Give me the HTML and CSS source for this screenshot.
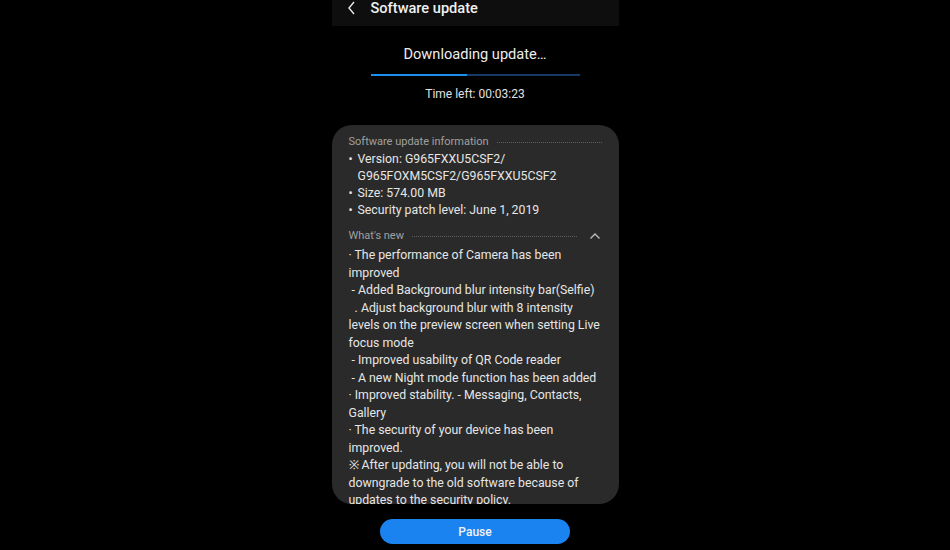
FILE: index.html
```html
<!DOCTYPE html>
<html lang="en">
<head>
    <meta charset="UTF-8">
    <title>Software update</title>
    <link rel="stylesheet" href="styles.css">
</head>
<body>
    <div class="screen">
        <div class="topbar">
            <svg class="back" width="10" height="14" viewBox="0 0 10 14"><path d="M7 1 L2 7 L7 13" fill="none" stroke="#e8e8e8" stroke-width="1.4"/></svg>
            <span class="title">Software update</span>
        </div>

        <div class="status">
            <div class="status-text">Downloading update…</div>
            <div class="progress"><div class="progress-fill" style="width: 46%"></div></div>
            <div class="time-left">Time left: 00:03:23</div>
        </div>

        <div class="card">
            <div class="section-head">
                <span>Software update information</span>
                <span class="dots"></span>
            </div>
            <ul class="info">
                <li>Version: G965FXXU5CSF2/<br>G965FOXM5CSF2/G965FXXU5CSF2</li>
                <li>Size: 574.00 MB</li>
                <li>Security patch level: June 1, 2019</li>
            </ul>

            <div class="section-head whats-new">
                <span>What's new</span>
                <span class="dots"></span>
                <svg class="chev" width="12" height="8" viewBox="0 0 12 8"><path d="M1.5 6.5 L6 2 L10.5 6.5" fill="none" stroke="#bdbdbd" stroke-width="1.3"/></svg>
            </div>
            <div class="notes">
                <p>· The performance of Camera has been<br>improved</p>
                <p>&nbsp;- Added Background blur intensity bar(Selfie)</p>
                <p>&nbsp;&nbsp;. Adjust background blur with 8 intensity<br>levels on the preview screen when setting Live<br>focus mode</p>
                <p>&nbsp;- Improved usability of QR Code reader</p>
                <p>&nbsp;- A new Night mode function has been added</p>
                <p>· Improved stability. - Messaging, Contacts,<br>Gallery</p>
                <p>· The security of your device has been<br>improved.</p>
                <p>※ After updating, you will not be able to<br>downgrade to the old software because of<br>updates to the security policy.</p>
            </div>
        </div>

        <div class="actions">
            <button class="pause">Pause</button>
        </div>
    </div>
</body>
</html>
```

FILE: styles.css
```css
body {
    margin: 0;
    background: #000;
    font-family: Roboto, "Liberation Sans", sans-serif;
    color: #e6e6e6;
}

.screen {
    width: 287px;
    margin: 0 auto;
    height: 550px;
}

.topbar {
    height: 26px;
    background: #0e0e0e;
    display: flex;
    align-items: flex-start;
    padding-left: 15px;
}

.back {
    margin-top: 1px;
}

.title {
    margin-left: 14px;
    font-size: 14.6px;
    font-weight: 500;
    line-height: 16px;
    color: #f0f0f0;
}

.status {
    text-align: center;
    padding-top: 18px;
}

.status-text {
    font-size: 14.6px;
    line-height: 20px;
    color: #ededed;
}

.progress {
    width: 209px;
    height: 2px;
    margin: 10px auto 0;
    background: #173a68;
}

.progress-fill {
    height: 100%;
    background: #1d8ff0;
}

.time-left {
    margin-top: 10px;
    font-size: 12px;
    line-height: 16px;
    color: #e0e0e0;
}

.card {
    margin-top: 23px;
    height: 379px;
    background: #2a2a2a;
    border-radius: 20px;
    overflow: hidden;
    padding: 9px 17px 0;
    box-sizing: border-box;
}

.section-head {
    display: flex;
    align-items: center;
    font-size: 11px;
    line-height: 16px;
    color: #a0a0a0;
}

.dots {
    flex: 1;
    margin-left: 8px;
    border-top: 1px dotted #5e5e5e;
}

.whats-new {
    margin-top: 9px;
}

.whats-new .dots {
    margin-right: 12px;
}

.chev {
    margin-right: 1px;
}

.info {
    list-style: none;
    margin: 1px 0 0;
    padding: 0;
    font-size: 12.3px;
    line-height: 17px;
}

.info li {
    position: relative;
    padding-left: 9px;
    white-space: nowrap;
}

.info li::before {
    content: "•";
    position: absolute;
    left: 0;
}

.notes {
    margin-top: 3px;
    font-size: 12.3px;
    line-height: 17.5px;
    white-space: nowrap;
}

.notes p {
    margin: 0;
}

.actions {
    display: flex;
    justify-content: center;
    padding-top: 15px;
}

.pause {
    width: 190px;
    height: 25px;
    border: none;
    border-radius: 13px;
    background: #1a83f0;
    color: #f2f2f2;
    font-family: Roboto, "Liberation Sans", sans-serif;
    font-size: 12px;
    font-weight: 500;
}
```
